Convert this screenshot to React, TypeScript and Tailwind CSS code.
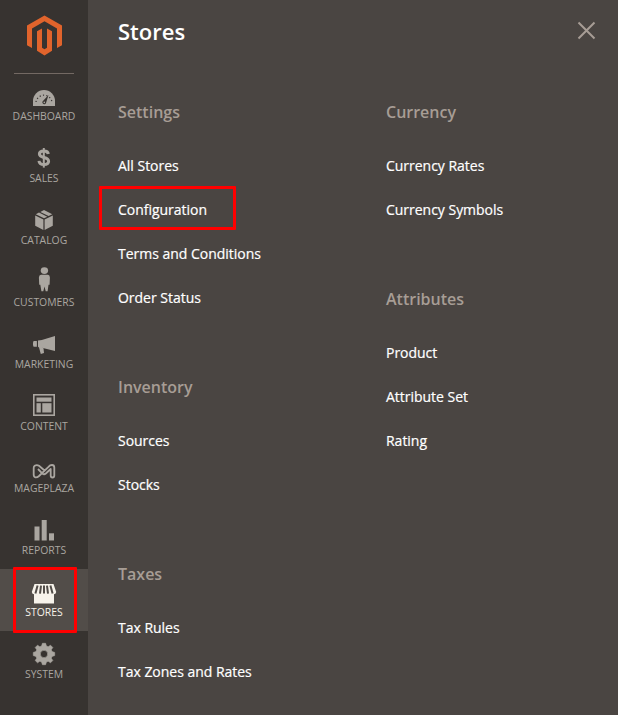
import * as React from "react";
import clsx from "clsx";

const menuItems = [
  { label: "Dashboard", icon: <DashboardIcon /> },
  { label: "Sales", icon: <SalesIcon /> },
  { label: "Catalog", icon: <CatalogIcon /> },
  { label: "Customers", icon: <CustomersIcon /> },
  { label: "Marketing", icon: <MarketingIcon /> },
  { label: "Content", icon: <ContentIcon /> },
  { label: "Mageplaza", icon: <MageplazaIcon /> },
  { label: "Reports", icon: <ReportsIcon /> },
  { label: "Stores", icon: <StoresIcon />, active: true },
  { label: "System", icon: <SystemIcon /> },
];

const leftGroups = [
  { title: "Settings", links: ["All Stores", "Configuration", "Terms and Conditions", "Order Status"] },
  { title: "Inventory", links: ["Sources", "Stocks"] },
  { title: "Taxes", links: ["Tax Rules", "Tax Zones and Rates"] },
];

const rightGroups = [
  { title: "Currency", links: ["Currency Rates", "Currency Symbols"] },
  { title: "Attributes", links: ["Product", "Attribute Set", "Rating"] },
];

export default function App() {
  return (
    <div className="flex w-[618px] h-[715px] overflow-hidden bg-[#4a4542] font-['Open_Sans',sans-serif]">
      <aside className="w-[88px] shrink-0 bg-[#373330]">
        <div className="h-[73px] pt-[15px] flex justify-center">
          <Logo />
        </div>
        <nav className="relative">
          <div className="absolute top-0 left-[14px] w-[60px] h-px bg-[#736963]" />
          {menuItems.map((item) => (
            <MenuItem key={item.label} {...item} />
          ))}
        </nav>
      </aside>

      <main className="flex-1 min-w-0 pl-[30px]">
        <div className="h-[101px] pt-4 pr-[22px] flex items-start justify-between">
          <h1 className="text-[22px] leading-[30px] font-semibold text-white">Stores</h1>
          <button aria-label="Close" className="mt-[5px]">
            <svg width="19" height="19" viewBox="0 0 19 19" fill="none" stroke="#a79d95" strokeWidth="2">
              <path d="M1.5 1.5l16 16M17.5 1.5l-16 16" />
            </svg>
          </button>
        </div>
        <div className="flex">
          <MenuColumn groups={leftGroups} />
          <MenuColumn groups={rightGroups} />
        </div>
      </main>
    </div>
  );
}

function MenuItem({ label, icon, active }: { label: string; icon: React.ReactNode; active?: boolean }) {
  return (
    <a
      href="#"
      className={clsx(
        "relative flex flex-col items-center h-[62px] pt-[6px]",
        active ? "bg-[#524d49] text-[#f7f3eb]" : "text-[#aaa6a0]"
      )}
    >
      {icon}
      <span className="text-[10.4px] leading-[11px] uppercase whitespace-nowrap">{label}</span>
      {active && <span className="absolute -top-[2px] left-[13px] w-[64px] h-[66px] border-3 border-[#ff0000] rounded-[1px] z-10" />}
    </a>
  );
}

function MenuColumn({ groups }: { groups: { title: string; links: string[] }[] }) {
  return (
    <div className="w-[268px] shrink-0 flex flex-col gap-14">
      {groups.map((group) => (
        <section key={group.title}>
          <h2 className="mb-[21px] text-[16px] leading-[22px] font-semibold text-[#a79d95]">{group.title}</h2>
          {group.links.map((link) => (
            <a
              key={link}
              href="#"
              className="relative flex items-center h-11 pb-[2px] text-[14px] tracking-[-0.02px] text-white [-webkit-text-stroke:0.2px_#ffffff]"
            >
              {link}
              {link === "Configuration" && (
                <span className="absolute -top-[2px] -left-[19px] w-[137px] h-[44px] border-3 border-[#ff0000] rounded-[1px]" />
              )}
            </a>
          ))}
        </section>
      ))}
    </div>
  );
}

function Logo() {
  return (
    <svg width="36" height="41" viewBox="0 0 36 41" fill="#e1642c">
      <path d="M18.5 0.5L36 10.5V30.3L31 33V13.5L18.5 6.3L6 13.5V33L1 30.3V10.5Z" />
      <path d="M11 16.2L16 13.4V32.8L18.5 34.3L21 32.8V13.4L26 16.2V35.7L18.5 40.5L11 35.7Z" />
    </svg>
  );
}

// shared 36x32 canvas, so each glyph sits at its own height above the label
function Icon({ children }: { children: React.ReactNode }) {
  return (
    <svg width="36" height="32" viewBox="0 -4 36 32" fill="currentColor" className="shrink-0">
      {children}
    </svg>
  );
}

function DashboardIcon() {
  return (
    <Icon>
      <path d="M7 23V18A11 11 0 0 1 29 18V23Z" />
      <path d="M16.5 18.5L22.5 12L20 20A1.9 1.9 0 1 1 16.5 18.5Z" fill="#373330" />
      <path d="M10 19A8.1 8.1 0 0 1 26 19" fill="none" stroke="#373330" strokeWidth="1.2" strokeDasharray="1.2 2.2" />
      <circle cx="18.3" cy="19.4" r="0.8" />
    </Icon>
  );
}

function SalesIcon() {
  return (
    <Icon>
      <path d="M17.8 3V22.6" fill="none" stroke="currentColor" strokeWidth="2" />
      <path
        d="M22.3 9C22.1 6.9 20.4 6.1 17.8 6.1C15.2 6.1 13.4 7.2 13.4 9.1C13.4 11.1 15 11.8 17.8 12.5C20.8 13.2 22.6 14 22.6 16.2C22.6 18.4 20.7 19.5 18 19.5C15 19.5 13.2 18.3 13 15.8"
        fill="none"
        stroke="currentColor"
        strokeWidth="3"
      />
    </Icon>
  );
}

function CatalogIcon() {
  return (
    <Icon>
      <path d="M9.2 8.5L17.4 12.5V23L9.2 18.7Z" />
      <path d="M26.8 8.5L18.6 12.5V23L26.8 18.7Z" />
      <path d="M9.8 7.2L13 5.6L21.3 9.7L18 11.3Z" />
      <path d="M14.3 4.9L18 3.1L26.3 7.2L22.6 9Z" />
    </Icon>
  );
}

function CustomersIcon() {
  return (
    <Icon>
      <ellipse cx="18.4" cy="1.6" rx="3.7" ry="3.4" />
      <path d="M15 5.8H22Q23.8 6.1 23.9 8.5L23.6 15.8H22.5L21.6 22.3H19.7L18.5 17.6L17.3 22.3H15.4L14.3 15.8H13.2L12.9 8.5Q13 6.1 15 5.8Z" />
    </Icon>
  );
}

function MarketingIcon() {
  return (
    <Icon>
      <path d="M29 5V20L15.8 16.8V9.1Z" />
      <path d="M12 9.4L16 9.1V16.5L17.5 17.2L18 22L14.8 23L13 16.5L12 15.8Z" />
      <path d="M7.6 10H10.9V15.7H7.6L7 14V11.5Z" />
    </Icon>
  );
}

function ContentIcon() {
  return (
    <Icon>
      <rect x="7.8" y="1.8" width="20.4" height="20.4" fill="none" stroke="currentColor" strokeWidth="1.6" />
      <rect x="10.5" y="4.5" width="15" height="4.2" />
      <rect x="10.5" y="10.2" width="4.3" height="9.3" />
      <rect x="16.3" y="10.2" width="9.2" height="9.3" />
    </Icon>
  );
}

function MageplazaIcon() {
  return (
    <Icon>
      <path
        d="M18.5 15.5L13 10.8Q10.8 9.3 8.7 10.8Q7.7 11.5 7.7 13V19.5Q7.7 22 9.5 22.4Q11.2 22.6 13 21L22.5 11.8Q24 10 26 10Q28.3 10 28.3 12.5V20.5Q28.3 22.5 26.5 22.5Q24.7 22.5 24.7 20.5V14L19.8 18.5Q18 20 16.2 18.3L12 14"
        fill="none"
        stroke="currentColor"
        strokeWidth="1.8"
        strokeLinejoin="round"
      />
    </Icon>
  );
}

function ReportsIcon() {
  return (
    <Icon>
      <rect x="8.5" y="9.5" width="5" height="14" />
      <rect x="15.7" y="3" width="5" height="20.5" />
      <rect x="23" y="16.3" width="5" height="7.2" />
    </Icon>
  );
}

function StoresIcon() {
  return (
    <Icon>
      <path d="M8.5 5H27.5L30.2 13Q29.8 15.2 28 15.2V24.5H8V15.2Q6.2 15.2 5.8 13Z" />
      <path
        d="M11.6 6.6L9.4 14.6M15 6.6L14 14.6M21 6.6L22 14.6M24.4 6.6L26.6 14.6M18 6.6V14.6"
        stroke="#524d49"
        strokeWidth="2"
      />
    </Icon>
  );
}

function SystemIcon() {
  return (
    <Icon>
      <g transform="translate(18 13)">
        <path
          fillRule="evenodd"
          stroke="currentColor"
          strokeWidth="0.6"
          strokeLinejoin="round"
          d="M-1.6 -10.7H1.6L2.4 -8L4.2 -7.3L6.5 -8.8L8.8 -6.5L7.3 -4.2L8 -2.4L10.7 -1.6V1.6L8 2.4L7.3 4.2L8.8 6.5L6.5 8.8L4.2 7.3L2.4 8L1.6 10.7H-1.6L-2.4 8L-4.2 7.3L-6.5 8.8L-8.8 6.5L-7.3 4.2L-8 2.4L-10.7 1.6V-1.6L-8 -2.4L-7.3 -4.2L-8.8 -6.5L-6.5 -8.8L-4.2 -7.3L-2.4 -8ZM0 -3.7A3.7 3.7 0 1 0 0 3.7A3.7 3.7 0 1 0 0 -3.7Z"
        />
      </g>
    </Icon>
  );
}
